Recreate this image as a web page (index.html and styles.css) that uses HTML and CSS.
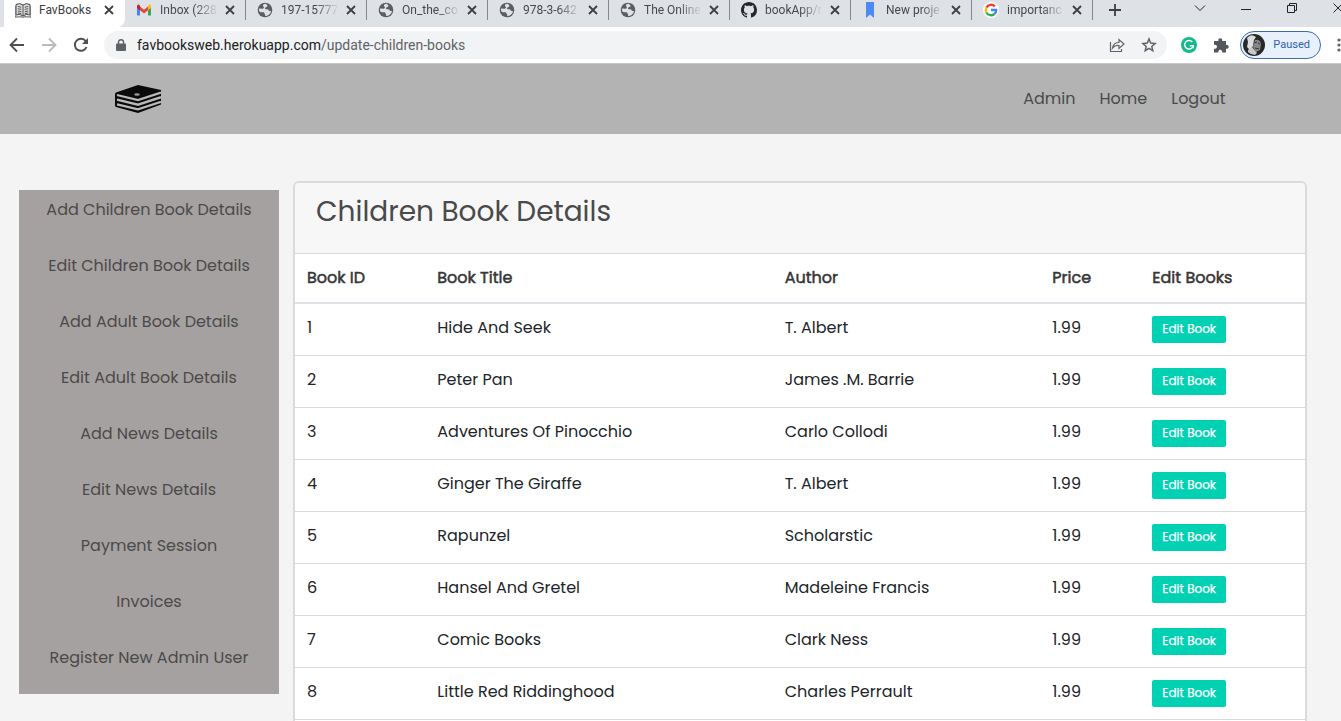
FILE: index.html
```html
<!DOCTYPE html>
<html lang="en">
<head>
<meta charset="utf-8">
<title>FavBooks</title>
<link rel="stylesheet" href="styles.css">
</head>
<body>
<svg class="defs" aria-hidden="true">
  <symbol id="x" viewBox="0 0 10 10"><path d="M1 1l8 8M9 1L1 9" fill="none" stroke="#3c4043" stroke-width="1.8"/></symbol>
  <symbol id="globe" viewBox="0 0 16 16"><circle cx="8" cy="8" r="7.3" fill="#5a5e63"/><path d="M9 1.8C6 2 5.2 3.400 6.500 4.700c1 .9.2 1.900-1 2L2 6.600C1.600 9 2.600 10.200 4 10.200l2.500.1c1.200.2.700 1.500 1.500 2l.2 1.800c3-.1 5.400-2.300 5.800-4.800l-2.200-.6c-.4-1.500-1.400-1.500-2.800-1.400-1.300-.1-1.300-1.500-.1-2 .8-.3 1-.7 1.700-1.300z" fill="#dee1e6"/></symbol>
</svg>

<div class="browser">
  <div class="tabstrip">
    <div class="tab active">
      <svg class="favicon" viewBox="0 0 16 16"><path d="M1 2.500Q5 .5 8 3q3-2.500 7-.5v10.500q-4-1.500-7 1-3-2.500-7-1z" fill="#ddd" stroke="#444"/><path d="M8 3v11M2.800 4.500l3.500.7M2.800 6.700l3.500.7M2.800 9l3.500.7M2.800 11l3.500.7M13.200 4.500l-3.500.7M13.200 6.700l-3.500.7M13.200 9l-3.500.7M13.200 11l-3.500.7M0 4v11l7-.2 1 .7 1-.7 7 .2V4" fill="none" stroke="#555"/></svg>
      <span class="tab-title">FavBooks</span>
      <button class="tab-close" aria-label="Close tab"><svg><use href="#x"/></svg></button>
    </div>
    <div class="tab">
      <svg class="favicon" viewBox="0 0 16 16"><path d="M1 4v9.500h3V6z" fill="#4285f4"/><path d="M15 4v9.500h-3V6z" fill="#34a853"/><path d="M4 4.500l4 3.200 4-3.200v3.800l-4 3.100-4-3.100z" fill="#ea4335"/><path d="M1 4.500Q1 2.500 2.700 2.600L4 3.700v4.600L1 6z" fill="#c5221f"/><path d="M15 4.500q0-2-1.700-1.900L12 3.700v4.600L15 6z" fill="#fbbc04"/></svg>
      <span class="tab-title fade">Inbox (228</span>
      <button class="tab-close" aria-label="Close tab"><svg><use href="#x"/></svg></button>
    </div>
    <div class="tab">
      <svg class="favicon"><use href="#globe"/></svg>
      <span class="tab-title fade">197-15777</span>
      <button class="tab-close" aria-label="Close tab"><svg><use href="#x"/></svg></button>
    </div>
    <div class="tab">
      <svg class="favicon"><use href="#globe"/></svg>
      <span class="tab-title fade">On_the_co</span>
      <button class="tab-close" aria-label="Close tab"><svg><use href="#x"/></svg></button>
    </div>
    <div class="tab">
      <svg class="favicon"><use href="#globe"/></svg>
      <span class="tab-title fade">978-3-642</span>
      <button class="tab-close" aria-label="Close tab"><svg><use href="#x"/></svg></button>
    </div>
    <div class="tab">
      <svg class="favicon"><use href="#globe"/></svg>
      <span class="tab-title fade">The Online</span>
      <button class="tab-close" aria-label="Close tab"><svg><use href="#x"/></svg></button>
    </div>
    <div class="tab">
      <svg class="favicon" viewBox="0 0 16 16"><path fill="#24292e" d="M8 0C3.580 0 0 3.580 0 8c0 3.540 2.290 6.530 5.470 7.590.4.070.550-.170.550-.380 0-.190-.010-.820-.010-1.490-2.010.370-2.530-.490-2.690-.940-.090-.230-.480-.940-.820-1.130-.280-.150-.680-.520-.010-.530.630-.010 1.080.580 1.230.820.720 1.210 1.870.870 2.330.660.070-.520.280-.870.510-1.070-1.780-.200-3.640-.890-3.640-3.950 0-.870.310-1.590.820-2.150-.080-.200-.360-1.020.080-2.120 0 0 .670-.210 2.200.820.640-.180 1.320-.270 2-.270s1.360.090 2 .270c1.530-1.040 2.200-.820 2.200-.820.440 1.100.160 1.920.080 2.120.510.560.820 1.270.820 2.150 0 3.070-1.870 3.750-3.650 3.950.290.250.540.730.540 1.480 0 1.070-.010 1.930-.010 2.200 0 .210.150.460.550.380A8.010 8.010 0 0 0 16 8c0-4.420-3.580-8-8-8z"/></svg>
      <span class="tab-title fade">bookApp/r</span>
      <button class="tab-close" aria-label="Close tab"><svg><use href="#x"/></svg></button>
    </div>
    <div class="tab">
      <svg class="favicon" viewBox="0 0 16 16"><path d="M4 0h8v16l-4-3.500L4 16z" fill="#4c8bf5"/></svg>
      <span class="tab-title fade">New proje</span>
      <button class="tab-close" aria-label="Close tab"><svg><use href="#x"/></svg></button>
    </div>
    <div class="tab">
      <svg class="favicon" viewBox="0 0 16 16"><circle cx="8" cy="8" r="8" fill="#fff"/><g fill="none" stroke-width="2.300"><path d="M11.800 4.400A5.200 5.200 0 0 0 3.400 5.600" stroke="#ea4335"/><path d="M3.400 5.600a5.200 5.200 0 0 0 0 4.800" stroke="#fbbc05"/><path d="M3.400 10.400a5.200 5.200 0 0 0 8 1.600" stroke="#34a853"/><path d="M11.400 12A5.200 5.200 0 0 0 13.200 8H8" stroke="#4285f4"/></g></svg>
      <span class="tab-title fade">importanc</span>
      <button class="tab-close" aria-label="Close tab"><svg><use href="#x"/></svg></button>
    </div>
    <button class="new-tab" aria-label="New tab"><svg viewBox="0 0 12 12"><path d="M6 0v12M0 6h12" stroke="#3c4043" stroke-width="1.800"/></svg></button>
    <div class="window-controls">
      <button aria-label="Search tabs"><svg viewBox="0 0 12 12"><path d="M1 3.500l5 5 5-5"/></svg></button>
      <button aria-label="Minimize"><svg viewBox="0 0 12 12"><path d="M1 7.500h10"/></svg></button>
      <button aria-label="Restore"><svg viewBox="0 0 12 12"><path d="M1.500 3.500h7v7h-7zM3.500 3.500v-2h7v7h-2"/></svg></button>
      <button aria-label="Close"><svg viewBox="0 0 12 12"><path d="M1.500 1.500l9 9M10.500 1.500l-9 9"/></svg></button>
    </div>
  </div>

  <div class="toolbar">
    <button class="tool" aria-label="Back"><svg viewBox="0 0 16 16"><path d="M15 8H2M8 1.500L1.500 8 8 14.500" fill="none" stroke="#4d5156" stroke-width="1.800"/></svg></button>
    <button class="tool" aria-label="Forward"><svg viewBox="0 0 16 16"><path d="M1 8h13M8 1.500L14.500 8 8 14.500" fill="none" stroke="#b9bcbf" stroke-width="1.800"/></svg></button>
    <button class="tool" aria-label="Reload"><svg viewBox="0 0 16 16"><path d="M13.500 10A6 6 0 1 1 12.800 4.300" fill="none" stroke="#4d5156" stroke-width="2"/><path d="M15 1v6H9z" fill="#4d5156"/></svg></button>
    <div class="omnibox">
      <svg class="lock" viewBox="0 0 10 12"><path d="M1 4.500h8a1 1 0 0 1 1 1V11a1 1 0 0 1-1 1H1a1 1 0 0 1-1-1V5.500a1 1 0 0 1 1-1z" fill="#5f6368"/><path d="M2.500 5V3a2.500 2.300 0 0 1 5 0v2" fill="none" stroke="#5f6368" stroke-width="1.400"/></svg>
      <div class="url"><span>favbooksweb.herokuapp.com</span>/update-children-books</div>
      <button class="omni-btn" aria-label="Share"><svg viewBox="0 0 16 16"><path d="M1.500 5v9.500h11V12M3.500 11Q4.500 5.500 10 5.500V2.500L15 7l-5 4.500V8.500Q6 8 3.500 11z" fill="none" stroke="#5f6368" stroke-width="1.200"/></svg></button>
      <button class="omni-btn" aria-label="Bookmark"><svg viewBox="0 0 16 16"><path d="M8 2l1.700 4.100 4.400.4-3.300 2.900 1 4.300L8 11.400l-3.800 2.300 1-4.300L1.900 6.500l4.400-.4z" fill="none" stroke="#5f6368" stroke-width="1.500"/></svg></button>
    </div>
    <button class="tool" aria-label="Grammar"><svg viewBox="0 0 16 16"><circle cx="8" cy="8" r="8" fill="#15b98c"/><path d="M11.300 5A4.300 4.300 0 1 0 12.200 8.800H8.800M12.200 8.300v3" fill="none" stroke="#fff" stroke-width="1.400"/></svg></button>
    <button class="tool" aria-label="Extensions"><svg viewBox="0 0 16 16"><path d="M1 4h4.500a2 2 0 1 1 3.600 0H13v4a2 2 0 1 1 0 3.700V15.500H9a1.900 1.900 0 1 0-3.500 0H1v-4a2 2 0 1 0 0-3.500z" fill="#54585d"/></svg></button>
    <button class="profile">
      <svg viewBox="0 0 22 22"><circle cx="11" cy="11" r="11" fill="#292929"/><path d="M4 4Q8-1 13 3l-2 3-1 6-3 4-3-3 1-5z" fill="#ddd"/><path d="M12 6q5-1 6 4l-1 6-4 2-3-5z" fill="#888"/><path d="M5 16l4-3 5 6-2 2q-4 0-7-3z" fill="#c9c9c9"/><path d="M11 9l3-1M15 9l2 1M12 14l4 1" stroke="#333"/></svg>
      <span>Paused</span>
    </button>
    <button class="more" aria-label="Menu"><svg viewBox="0 0 4 14"><circle cx="2" cy="2" r="1.600"/><circle cx="2" cy="7" r="1.600"/><circle cx="2" cy="12" r="1.600"/></svg></button>
  </div>
</div>

<header class="navbar">
  <div class="container">
    <a href="#" class="brand" aria-label="FavBooks home">
      <svg viewBox="0 0 46 28"><path d="M0 8.500L1 7.500 23 0l23 5v14.500L23 28 1 22l-1-1z" fill="#0a0a0a"/><path d="M2 10l21 5 23-7.500M2 14.700l21 5 23-7.500M2 19.400l21 5 23-7.500" fill="none" stroke="#b9b9b9" stroke-width="2.300"/><ellipse cx="22" cy="9.500" rx="2.800" ry="1.300" fill="#999"/></svg>
    </a>
    <nav class="links"><a href="#">Admin</a><a href="#">Home</a><a href="#">Logout</a></nav>
  </div>
</header>

<main class="content">
  <nav class="sidebar">
    <a href="#">Add Children Book Details</a>
    <a href="#">Edit Children Book Details</a>
    <a href="#">Add Adult Book Details</a>
    <a href="#">Edit Adult Book Details</a>
    <a href="#">Add News Details</a>
    <a href="#">Edit News Details</a>
    <a href="#">Payment Session</a>
    <a href="#">Invoices</a>
    <a href="#">Register New Admin User</a>
  </nav>
  <section class="card">
    <h1>Children Book Details</h1>
    <table>
      <colgroup><col class="c-id"><col class="c-title"><col class="c-author"><col class="c-price"><col></colgroup>
      <thead><tr><th>Book ID</th><th>Book Title</th><th>Author</th><th>Price</th><th>Edit Books</th></tr></thead>
      <tbody>
        <tr><td>1</td><td>Hide And Seek</td><td>T. Albert</td><td>1.99</td><td><button class="edit">Edit Book</button></td></tr>
        <tr><td>2</td><td>Peter Pan</td><td>James .M. Barrie</td><td>1.99</td><td><button class="edit">Edit Book</button></td></tr>
        <tr><td>3</td><td>Adventures Of Pinocchio</td><td>Carlo Collodi</td><td>1.99</td><td><button class="edit">Edit Book</button></td></tr>
        <tr><td>4</td><td>Ginger The Giraffe</td><td>T. Albert</td><td>1.99</td><td><button class="edit">Edit Book</button></td></tr>
        <tr><td>5</td><td>Rapunzel</td><td>Scholarstic</td><td>1.99</td><td><button class="edit">Edit Book</button></td></tr>
        <tr><td>6</td><td>Hansel And Gretel</td><td>Madeleine Francis</td><td>1.99</td><td><button class="edit">Edit Book</button></td></tr>
        <tr><td>7</td><td>Comic Books</td><td>Clark Ness</td><td>1.99</td><td><button class="edit">Edit Book</button></td></tr>
        <tr><td>8</td><td>Little Red Riddinghood</td><td>Charles Perrault</td><td>1.99</td><td><button class="edit">Edit Book</button></td></tr>
      </tbody>
    </table>
  </section>
</main>
</body>
</html>
```
FILE: styles.css
```css
* { box-sizing: border-box; }
body {
  margin: 0;
  min-height: 100vh;
  display: flex;
  flex-direction: column;
  overflow-x: hidden;
  background: #f4f4f4;
  color: #212529;
  font: 400 16px/24px Poppins, Inter, sans-serif;
}
a { color: inherit; text-decoration: none; }
button { border: 0; padding: 0; background: none; font: inherit; color: inherit; cursor: pointer; }
svg { display: block; }
.defs { display: none; }

/* Browser frame */
.browser { background: #fff; border-bottom: 1px solid #c8c8c8; font: 400 12px/20px "Segoe UI", Roboto, sans-serif; overflow: hidden; }
.tabstrip { display: flex; height: 27px; padding-left: 4px; background: #dee1e6; }
.tab { flex: 0 1 121px; min-width: 0; height: 20px; display: flex; align-items: center; padding: 0 10px 0 11px; border-right: 1px solid #85898e; color: #45494d; }
.tab.active { height: 27px; padding-bottom: 7px; background: #fff; border-right-color: #fff; border-radius: 0 0 8px 0; color: #3c4043; }
.favicon { flex: none; width: 16px; height: 16px; }
.tab-title { flex: 1; min-width: 0; margin-left: 8px; overflow: hidden; white-space: nowrap; }
.tab-title.fade { -webkit-mask-image: linear-gradient(to right, #000 60%, transparent); mask-image: linear-gradient(to right, #000 60%, transparent); }
.tab-close { flex: none; margin-left: 7px; }
.tab-close svg { width: 10px; height: 10px; }
.new-tab { height: 20px; width: 44px; display: grid; place-items: center; }
.new-tab svg { width: 12px; height: 12px; }
.window-controls { display: flex; margin: 0 -20px 0 auto; }
.window-controls button { width: 46px; height: 15px; display: grid; place-items: center; }
.window-controls svg { width: 12px; height: 12px; fill: none; stroke: #222; }
.toolbar { display: flex; align-items: center; height: 36px; padding-left: 9px; }
.tool { flex: none; width: 32px; height: 28px; display: grid; place-items: center; }
.tool:first-child { width: 16px; margin-right: 8px; }
.tool svg { width: 16px; height: 16px; }
.omnibox { flex: 1; min-width: 0; height: 28px; display: flex; align-items: center; margin: 0 6px 0 7px; padding: 0 10px 0 12px; border-radius: 14px; background: #f1f3f4; }
.lock { width: 10px; height: 12px; }
.url { flex: 1; margin-left: 11px; font-size: 14px; color: #5f6368; white-space: nowrap; overflow: hidden; }
.url span { color: #202124; }
.omni-btn { width: 32px; display: grid; place-items: center; }
.omni-btn:last-child { width: 16px; margin-left: 8px; }
.omni-btn svg { width: 16px; height: 16px; }
.profile { flex: none; display: flex; align-items: center; gap: 8px; height: 28px; margin: 0 16px 0 3px; padding: 0 10px 0 2px; border: 1px solid #3b6ab3; border-radius: 14px; background: #e8f0fc; color: #2c62b4; font-size: 11px; }
.profile svg { width: 22px; height: 22px; }
.more { flex: none; width: 4px; }
.more svg { width: 4px; height: 14px; fill: #5f6368; }

/* Site header */
.navbar { background: #b3b3b3; color: #4a4a4a; }
.container { display: flex; align-items: center; justify-content: space-between; max-width: 1140px; height: 70px; margin: 0 auto; padding: 0 15px 0 14px; }
.brand svg { width: 46px; height: 28px; }
.links { display: flex; gap: 24px; }

/* Page */
.content { flex: 1; display: flex; align-items: flex-start; gap: 14px; padding: 47px 34px 0 19px; }
.sidebar { flex: none; width: 260px; margin-top: 9px; background: #a5a1a0; color: #4a4a4a; text-align: center; }
.sidebar a { display: block; height: 56px; padding-top: 8px; }
.card { flex: 1; min-width: 0; align-self: stretch; border: 2px solid #d9dadb; border-bottom: 0; border-radius: 6px 6px 0 0; background: #fff; overflow: hidden; }
h1 { margin: 0; padding: 8px 21px 20px; background: #f7f7f7; border-bottom: 1px solid #dbdbdb; color: #4a4a4a; font-size: 28px; font-weight: 400; line-height: 42px; }
table { width: 100%; table-layout: fixed; border-collapse: separate; border-spacing: 0; }
.c-id { width: 12.9%; }
.c-title { width: 34.4%; }
.c-author { width: 26.5%; }
.c-price { width: 9.9%; }
th, td { padding: 12px; text-align: left; vertical-align: top; }
th { height: 50px; border-bottom: 2px solid #dee2e6; color: #363636; font-weight: 400; -webkit-text-stroke: 0.5px #363636; }
td { height: 52px; border-bottom: 1px solid #dbdbdb; }
.edit { display: block; height: 27px; padding: 0 10px 2px; border-radius: 2px; background: #00d1b2; color: #fff; font-size: 12px; line-height: 24px; white-space: nowrap; -webkit-text-stroke: 0.25px #fff; }
```
